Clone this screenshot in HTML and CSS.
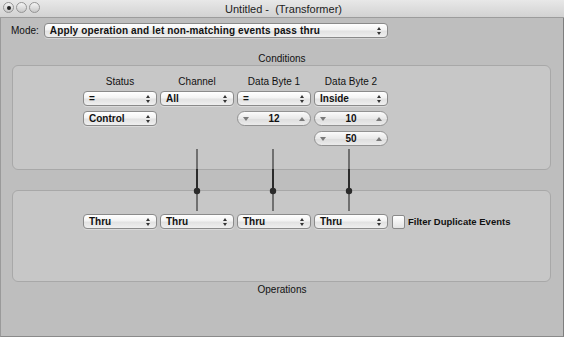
FILE: index.html
```html
<!DOCTYPE html>
<html>
  <head>
    <title>Untitled - (Transformer)</title>
    <link rel="stylesheet" href="styles.css">
  </head>
  <body>
    <div class="window">
      <div class="titlebar">
        <div class="lights">
          <span class="light light-dot"></span>
          <span class="light"></span>
          <span class="light"></span>
        </div>
        <div class="title">Untitled -&nbsp; (Transformer)</div>
      </div>

      <div class="mode-row">
        <span class="mode-label">Mode:</span>
        <div class="popup popup-wide">Apply operation and let non-matching events pass thru</div>
      </div>

      <div class="group-title">Conditions</div>
      <div class="box box-cond">
        <div class="cols heads">
          <div class="head">Status</div>
          <div class="head">Channel</div>
          <div class="head">Data Byte 1</div>
          <div class="head">Data Byte 2</div>
        </div>
        <div class="cols">
          <div class="popup">=</div>
          <div class="popup">All</div>
          <div class="popup">=</div>
          <div class="popup">Inside</div>
        </div>
        <div class="cols">
          <div class="popup">Control</div>
          <div class="slot"></div>
          <div class="stepper"><span class="down"></span>12<span class="up"></span></div>
          <div class="stepper"><span class="down"></span>10<span class="up"></span></div>
        </div>
        <div class="cols">
          <div class="slot"></div>
          <div class="slot"></div>
          <div class="slot"></div>
          <div class="stepper"><span class="down"></span>50<span class="up"></span></div>
        </div>
      </div>

      <div class="box box-ops">
        <div class="cols">
          <div class="popup">Thru</div>
          <div class="popup">Thru</div>
          <div class="popup">Thru</div>
          <div class="popup">Thru</div>
          <label class="check"><span class="checkbox"></span>Filter Duplicate Events</label>
        </div>
      </div>
      <div class="group-title group-title-bottom">Operations</div>

      <!-- connector sliders between the two boxes -->
      <svg class="links" width="564" height="337">
        <g stroke-width="2">
          <line x1="197" y1="149" x2="197" y2="169" stroke="#707070" />
          <line x1="197" y1="169" x2="197" y2="191" stroke="#2b2b2b" />
          <line x1="197" y1="191" x2="197" y2="211" stroke="#707070" />
          <line x1="273" y1="149" x2="273" y2="169" stroke="#707070" />
          <line x1="273" y1="169" x2="273" y2="191" stroke="#2b2b2b" />
          <line x1="273" y1="191" x2="273" y2="211" stroke="#707070" />
          <line x1="349" y1="149" x2="349" y2="169" stroke="#707070" />
          <line x1="349" y1="169" x2="349" y2="191" stroke="#2b2b2b" />
          <line x1="349" y1="191" x2="349" y2="211" stroke="#707070" />
        </g>
        <circle cx="197" cy="191" r="3.2" fill="#2b2b2b" />
        <circle cx="273" cy="191" r="3.2" fill="#2b2b2b" />
        <circle cx="349" cy="191" r="3.2" fill="#2b2b2b" />
      </svg>
    </div>
  </body>
</html>
```

FILE: styles.css
```css
body {
  margin: 0;
  font-family: "Liberation Sans", Arial, sans-serif;
  font-size: 10px;
  color: #111;
}
.window {
  position: relative;
  width: 564px;
  height: 337px;
  box-sizing: border-box;
  background-color: #bebebe;
  border-left: 1px solid #9a9a9a;
  border-right: 1px solid #7e7e7e;
  border-bottom: 1px solid #8a8a8a;
}
.titlebar {
  display: flex;
  align-items: center;
  height: 17px;
  margin-left: -1px;
  margin-right: -1px;
  background: linear-gradient(#e8e8e8, #d2d2d2);
  border-bottom: 1px solid #9c9c9c;
}
.lights {
  display: flex;
  gap: 2px;
  padding-left: 3px;
  width: 80px;
  margin-top: -2px;
}
.light {
  position: relative;
  width: 9px;
  height: 9px;
  border-radius: 50%;
  border: 1px solid #959595;
  background: linear-gradient(#f4f4f4, #c8c8c8);
}
.light-dot::after {
  content: "";
  position: absolute;
  left: 2.5px;
  top: 2.5px;
  width: 4px;
  height: 4px;
  border-radius: 50%;
  background-color: #222;
}
.title {
  flex: 1;
  text-align: center;
  font-size: 11px;
  color: #222;
  margin-right: 80px;
}
.mode-row {
  display: flex;
  align-items: center;
  gap: 5px;
  margin-top: 5px;
  padding-left: 10px;
}
.popup {
  position: relative;
  box-sizing: border-box;
  width: 74px;
  height: 15px;
  line-height: 13px;
  padding-left: 5px;
  font-weight: bold;
  border: 1px solid #8a8a8a;
  border-radius: 4px;
  background: linear-gradient(#ffffff, #f3f3f3 45%, #e2e2e2 55%, #efefef);
  box-shadow: 0 1px 0 rgba(255, 255, 255, 0.35);
}
.popup::before,
.popup::after {
  content: "";
  position: absolute;
  right: 6px;
  border-left: 2.5px solid transparent;
  border-right: 2.5px solid transparent;
}
.popup::before {
  top: 3px;
  border-bottom: 3px solid #333;
}
.popup::after {
  top: 8px;
  border-top: 3px solid #333;
}
.popup-wide {
  width: 344px;
  letter-spacing: 0.15px;
}
.group-title {
  text-align: center;
  line-height: 13px;
  margin-top: 14px;
}
.group-title-bottom {
  margin-top: 1px;
}
.box {
  margin: 0 12px 0 11px;
  box-sizing: border-box;
  border: 1px solid #a8a8a8;
  border-radius: 6px;
  background-color: #c7c7c7;
  padding-left: 70px;
}
.box-cond {
  height: 105px;
  padding-top: 9px;
}
.box-ops {
  height: 92px;
  margin-top: 20px;
  padding-top: 23px;
}
.cols {
  display: flex;
  gap: 3px;
  margin-bottom: 5px;
}
.heads {
  margin-bottom: 3px;
}
.head {
  width: 74px;
  text-align: center;
  line-height: 13px;
}
.slot {
  width: 74px;
  height: 15px;
}
.stepper {
  position: relative;
  box-sizing: border-box;
  width: 74px;
  height: 15px;
  line-height: 13px;
  text-align: center;
  font-weight: bold;
  border: 1px solid #929292;
  border-radius: 8px;
  background: linear-gradient(#fbfbfb, #e9e9e9 50%, #dedede 55%, #ebebeb);
}
.stepper .down,
.stepper .up {
  position: absolute;
  top: 5px;
  border-left: 3px solid transparent;
  border-right: 3px solid transparent;
}
.stepper .down {
  left: 5px;
  border-top: 4px solid #7a7a7a;
}
.stepper .up {
  right: 5px;
  border-bottom: 4px solid #7a7a7a;
}
.check {
  display: flex;
  align-items: center;
  gap: 3px;
  margin-left: 1px;
  font-weight: bold;
  font-size: 9.5px;
}
.checkbox {
  box-sizing: border-box;
  width: 13px;
  height: 14px;
  border: 1px solid #8a8a8a;
  border-radius: 2px;
  background: linear-gradient(#ffffff, #e3e3e3);
}
.links {
  position: absolute;
  left: -1px;
  top: 0;
  pointer-events: none;
}
```
